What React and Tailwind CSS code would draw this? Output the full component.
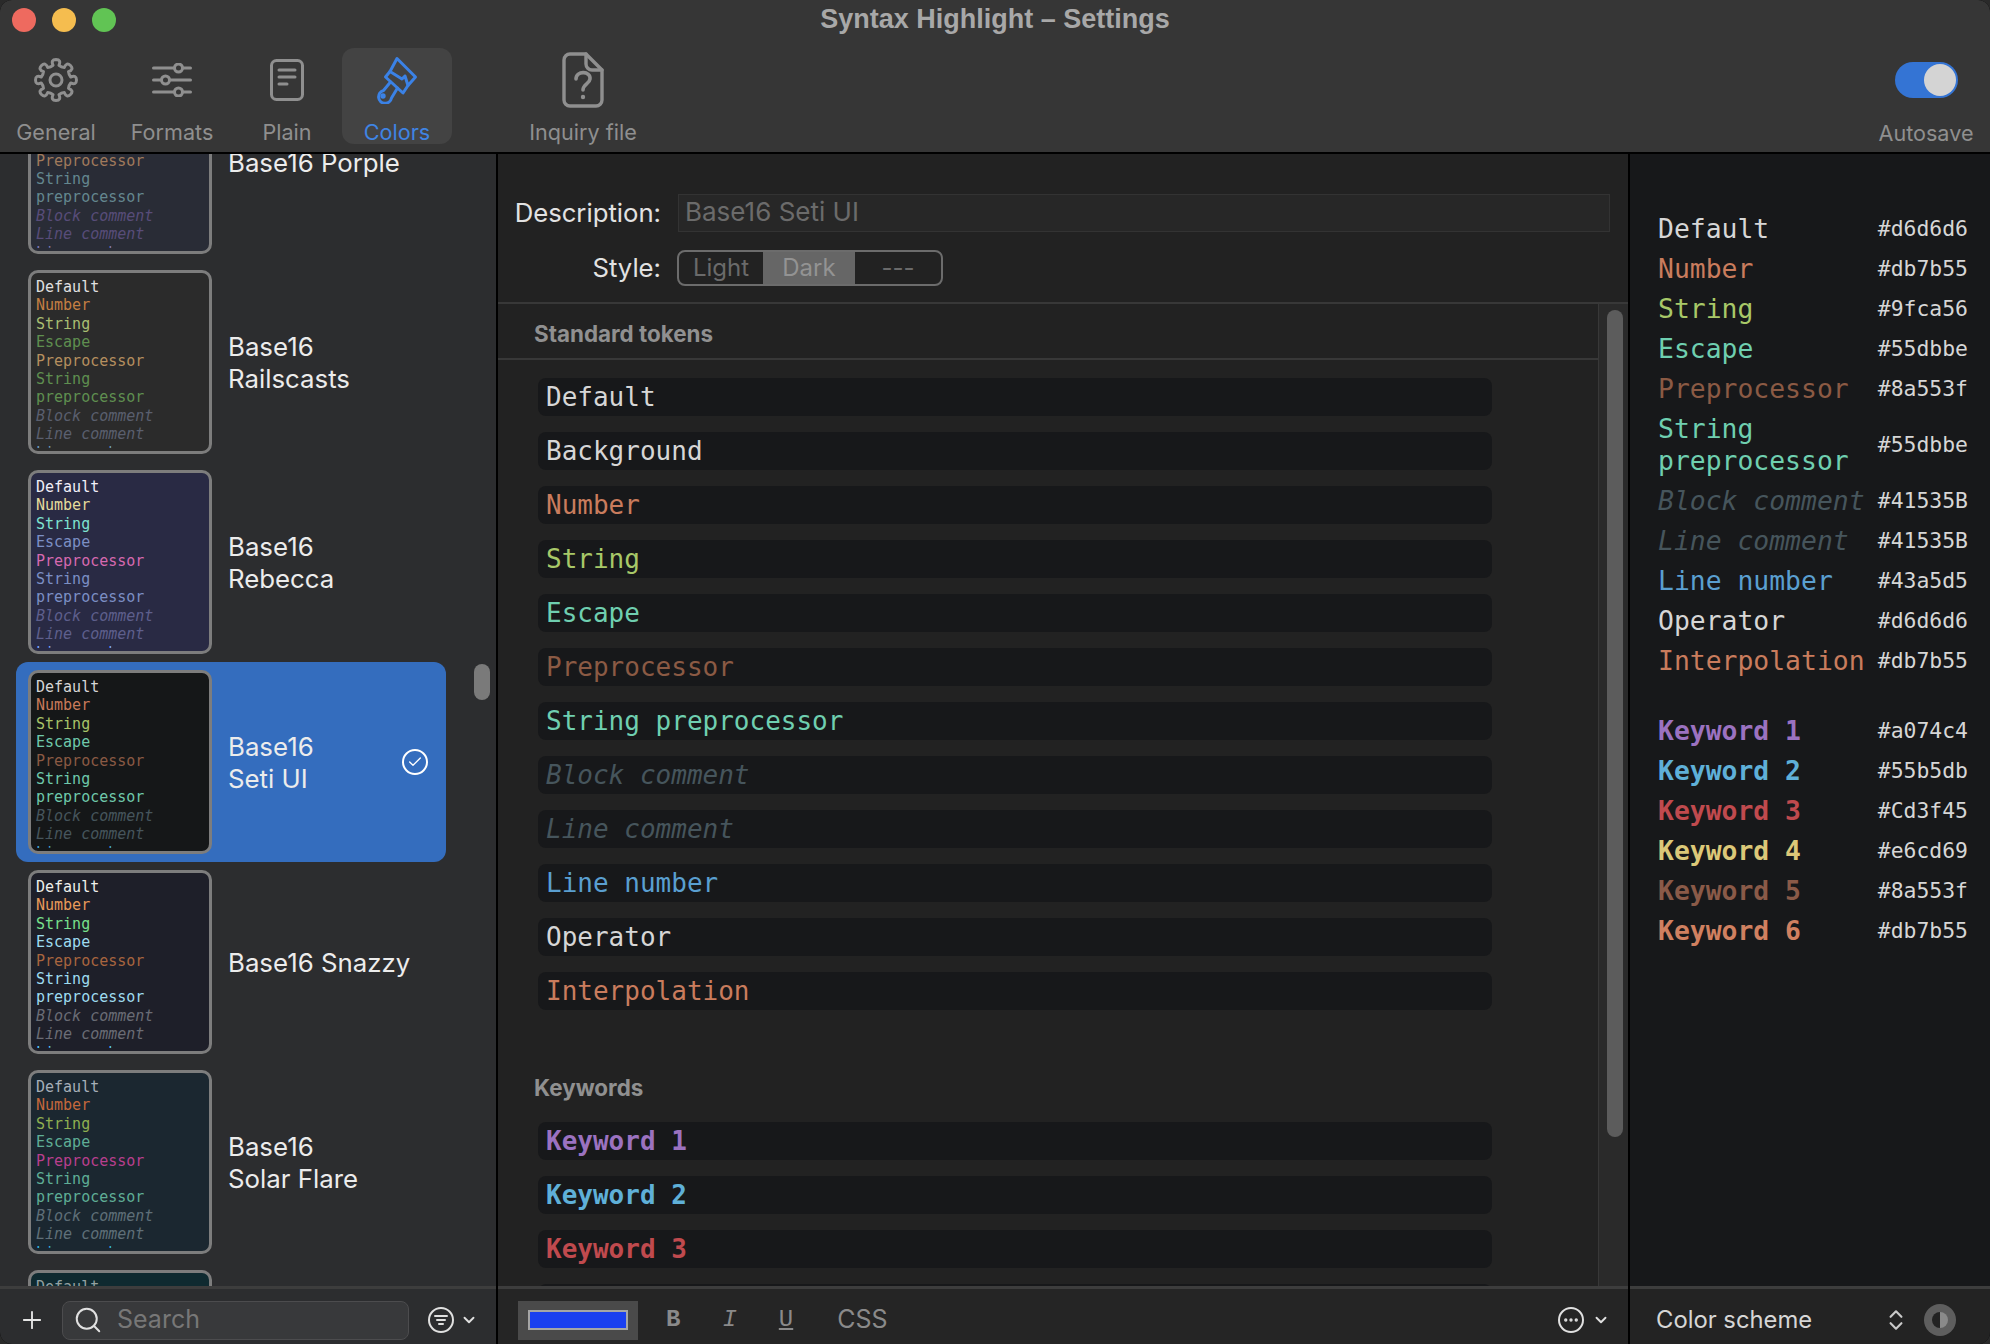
import { Plus, Search, ChevronDown, ChevronsUpDown, Check, Ellipsis } from "lucide-react";

const mono = "font-['DejaVu_Sans_Mono','Liberation_Mono',monospace]";

const themes = [
  {
    name: ["Base16 Porple"],
    bg: "bg-[#292c36]",
    colors: ["#d8d8d8", "#d28e5d", "#9a9f6f", "#64878f", "#a07a5c", "#64878f", "#64878f", "#584c79", "#584c79", "#7e79b5"],
  },
  {
    name: ["Base16", "Railscasts"],
    bg: "bg-[#2b2b2b]",
    colors: ["#e0e0e0", "#c47f43", "#a9bf72", "#5f8f50", "#b58f5f", "#5f8f50", "#5f8f50", "#5a5f6e", "#5a5f6e", "#6d9cbe"],
  },
  {
    name: ["Base16", "Rebecca"],
    bg: "bg-[#292a44]",
    colors: ["#f1eff8", "#e5dc9c", "#7fe3d0", "#7c8fc4", "#d669b0", "#7c8fc4", "#7c8fc4", "#5e5f8c", "#5e5f8c", "#7aa5ff"],
  },
  {
    name: ["Base16", "Seti UI"],
    bg: "bg-[#151718]",
    selected: true,
    colors: ["#d6d6d6", "#c87a5a", "#a8c468", "#6fc9ab", "#8a5a44", "#6fc9ab", "#6fc9ab", "#46555c", "#46555c", "#43a5d5"],
  },
  {
    name: ["Base16 Snazzy"],
    bg: "bg-[#1e1f29]",
    colors: ["#eff0eb", "#e89a5a", "#78e08c", "#9edcf0", "#a8653f", "#9edcf0", "#9edcf0", "#6a6c75", "#6a6c75", "#57c7ff"],
  },
  {
    name: ["Base16", "Solar Flare"],
    bg: "bg-[#1b2730]",
    colors: ["#a6afb8", "#c4683c", "#8fb050", "#5fae96", "#b83f8e", "#5fae96", "#5fae96", "#5f6f78", "#5f6f78", "#33b5e1"],
  },
  {
    name: ["Base16", "Solarized Dark"],
    bg: "bg-[#0f2a30]",
    colors: ["#93a1a1", "#d33682", "#859900", "#2aa198", "#cb4b16", "#2aa198", "#2aa198", "#586e75", "#586e75", "#268bd2"],
  },
];

const sampleLines = [
  "Default", "Number", "String", "Escape", "Preprocessor", "String", "preprocessor", "Block comment", "Line comment", "Line number",
];

const tokens = [
  { name: "Default", color: "#d6d6d6", hex: "#d6d6d6" },
  { name: "Number", color: "#c97c5d", hex: "#db7b55" },
  { name: "String", color: "#a8c868", hex: "#9fca56" },
  { name: "Escape", color: "#6fcfb0", hex: "#55dbbe" },
  { name: "Preprocessor", color: "#8b5a44", hex: "#8a553f" },
  { name: "String preprocessor", color: "#6fcfb0", hex: "#55dbbe" },
  { name: "Block comment", color: "#46555c", hex: "#41535B", italic: true },
  { name: "Line comment", color: "#46555c", hex: "#41535B", italic: true },
  { name: "Line number", color: "#5a9fd0", hex: "#43a5d5" },
  { name: "Operator", color: "#d6d6d6", hex: "#d6d6d6" },
  { name: "Interpolation", color: "#c97c5d", hex: "#db7b55" },
];

const keywords = [
  { name: "Keyword 1", color: "#9b72c0", hex: "#a074c4" },
  { name: "Keyword 2", color: "#5fb0d8", hex: "#55b5db" },
  { name: "Keyword 3", color: "#c04a4e", hex: "#Cd3f45" },
  { name: "Keyword 4", color: "#dcc878", hex: "#e6cd69" },
  { name: "Keyword 5", color: "#8a5a48", hex: "#8a553f" },
  { name: "Keyword 6", color: "#d08060", hex: "#db7b55" },
];

// gear outline with 8 rounded teeth
function gearPath(cx, cy, outer, inner) {
  const pts = [];
  for (let i = 0; i < 8; i++) {
    const a = (i * Math.PI) / 4 - Math.PI / 2;
    const p = (r, d) => `${(cx + r * Math.cos(a + d)).toFixed(2)} ${(cy + r * Math.sin(a + d)).toFixed(2)}`;
    pts.push(`${i === 0 ? "M" : "Q"} ${i === 0 ? "" : p(inner * 0.92, -Math.PI / 8) + " "}${p(inner, -0.2)}`);
    pts.push(`Q ${p(outer * 1.03, -0.26)} ${p(outer, 0)}`);
    pts.push(`Q ${p(outer * 1.03, 0.26)} ${p(inner, 0.2)}`);
  }
  const a = -Math.PI / 2;
  const r = inner;
  pts.push(`Q ${(cx + inner * 0.92 * Math.cos(a - Math.PI / 8)).toFixed(2)} ${(cy + inner * 0.92 * Math.sin(a - Math.PI / 8)).toFixed(2)} ${(cx + r * Math.cos(a - 0.2)).toFixed(2)} ${(cy + r * Math.sin(a - 0.2)).toFixed(2)}`);
  return pts.join(" ") + " Z";
}

function GearIcon() {
  return (
    <svg width="44" height="44" viewBox="0 0 44 44" fill="none" stroke="#8f8f8f" strokeWidth="3" strokeLinejoin="round">
      <path d={gearPath(22, 22, 20.5, 15)} />
      <circle cx="22" cy="22" r="6" />
    </svg>
  );
}

function SlidersIcon() {
  return (
    <svg width="40" height="34" viewBox="0 0 40 34" fill="none" stroke="#8f8f8f" strokeWidth="3" strokeLinecap="round">
      <path d="M1.5 5H22M31 5H38.5M1.5 17H9M18 17H38.5M1.5 29H22M31 29H38.5" />
      <circle cx="26.5" cy="5" r="4" />
      <circle cx="13.5" cy="17" r="4" />
      <circle cx="26.5" cy="29" r="4" />
    </svg>
  );
}

function DocIcon() {
  return (
    <svg width="34" height="42" viewBox="0 0 34 42" fill="none" stroke="#8f8f8f" strokeWidth="3" strokeLinecap="round">
      <rect x="1.5" y="1.5" width="31" height="39" rx="5" />
      <path d="M9 11H25M9 18H25M9 25H17" />
    </svg>
  );
}

function BrushIcon() {
  return (
    <svg width="44" height="48" viewBox="376 56 44 48" fill="none" stroke="#3b82e6" strokeWidth="3" strokeLinejoin="round" strokeLinecap="round">
      <path d="M398 58.5L416.5 77L409 85.5L406 76L403 79L391 71.5Z" />
      <path d="M391 71.5L386.5 77L404 93L409 85.5" />
      <path d="M391.5 82L384.5 90.5A6.5 6.5 0 1 0 392.500 98L398.500 88" />
      <circle cx="384" cy="96" r="1.2" fill="#3b82e6" />
    </svg>
  );
}

function InquiryIcon() {
  return (
    <svg width="42" height="56" viewBox="0 0 42 56" fill="none" stroke="#8f8f8f" strokeWidth="3.4" strokeLinejoin="round" strokeLinecap="round">
      <path d="M24 2H8A6 6 0 0 0 2 8V48A6 6 0 0 0 8 54H34A6 6 0 0 0 40 48V18Z" />
      <path d="M24 2V12A6 6 0 0 0 30 18H40" />
      <path d="M14 27C14 18 29 19 28 27C27.500 32 21 32 21 38" strokeWidth="3.6" />
      <circle cx="21" cy="45" r="1.4" fill="#8f8f8f" strokeWidth="1.6" />
    </svg>
  );
}

function ToolItem({ label, width, active, children }) {
  return (
    <div className={`${width} h-[96px] flex flex-col items-center rounded-[12px] ${active ? "bg-[#434343]" : ""}`}>
      <div className="h-[64px] flex items-center justify-center">{children}</div>
      <div className={`mt-[9px] text-[21.6px] leading-6 ${active ? "text-[#3f84e4]" : "text-[#8f8f8f]"}`}>{label}</div>
    </div>
  );
}

function Toolbar() {
  return (
    <header className="h-[154px] bg-[#363636] border-b-2 border-black shrink-0">
      <div className="h-[48px] flex items-start">
        <div className="w-[130px] pl-3 pt-2 flex gap-4">
          <span className="w-6 h-6 rounded-full bg-[#ee6a5f]" />
          <span className="w-6 h-6 rounded-full bg-[#f5bd4f]" />
          <span className="w-6 h-6 rounded-full bg-[#61c454]" />
        </div>
        <div className="flex-1 pt-[3px] text-center text-[27px] leading-8 font-bold text-[#a8a8a8] font-['Liberation_Sans',sans-serif]">
          Syntax Highlight – Settings
        </div>
        <div className="w-[130px]" />
      </div>
      <div className="flex">
        <ToolItem label="General" width="w-[112px]"><GearIcon /></ToolItem>
        <ToolItem label="Formats" width="w-[120px]"><SlidersIcon /></ToolItem>
        <ToolItem label="Plain" width="w-[110px]"><DocIcon /></ToolItem>
        <ToolItem label="Colors" width="w-[110px]" active><BrushIcon /></ToolItem>
        <div className="ml-[66px]">
          <ToolItem label="Inquiry file" width="w-[130px]"><InquiryIcon /></ToolItem>
        </div>
        <div className="ml-auto mr-2 w-[112px] flex flex-col items-center">
          <div className="h-[64px] flex items-center justify-center">
            <div className="w-[63px] h-[36px] rounded-full bg-[#3474d4] flex items-center justify-end pr-[2px]">
              <span className="w-[32px] h-[32px] rounded-full bg-[#d4d4d4]" />
            </div>
          </div>
          <div className="mt-[9px] text-[21.6px] leading-6 text-[#8f8f8f]">Autosave</div>
        </div>
      </div>
    </header>
  );
}

function Thumb({ theme }) {
  return (
    <div className={`w-[184px] h-[184px] shrink-0 rounded-[10px] border-[3px] border-[#7d7d7d] overflow-hidden ${theme.bg}`}>
      <div className={`pl-[5px] pt-[5px] h-[175px] overflow-hidden text-[15px] leading-[18.4px] ${mono}`}>
        {sampleLines.map((line, i) => (
          <div key={i} className={i === 7 || i === 8 ? "italic" : ""} style={{ color: theme.colors[i] }}>
            {line}
          </div>
        ))}
      </div>
    </div>
  );
}

function ThemeRow({ theme }) {
  return (
    <div className={`ml-4 mr-[50px] h-[200px] pl-3 pt-2 flex items-start rounded-[12px] ${theme.selected ? "bg-[#346dbe]" : ""}`}>
      <Thumb theme={theme} />
      <div className="h-[186px] flex-1 flex items-center pl-4 pr-[18px] justify-between">
        <div className="text-[25.8px] leading-8 text-[#ececec]">
          {theme.name.map((n) => <div key={n}>{n}</div>)}
        </div>
        {theme.selected && (
          <span className="-mt-[3px] w-[26px] h-[26px] rounded-full border-2 border-white flex items-center justify-center">
            <Check size={16} color="white" strokeWidth={2} />
          </span>
        )}
      </div>
    </div>
  );
}

function FilterIcon() {
  return (
    <svg width="26" height="26" viewBox="0 0 26 26" fill="none" stroke="#e0e0e0" strokeWidth="2" strokeLinecap="round">
      <circle cx="13" cy="13" r="12" />
      <path d="M7 9H19M9 13H17M11 17H15" />
    </svg>
  );
}

function Sidebar() {
  return (
    <aside className="w-[498px] shrink-0 flex flex-col bg-[#2c2d2f] border-r-2 border-black">
      <div className="relative flex-1 overflow-hidden">
        <div className="-mt-[92px]">
          {themes.map((t) => <ThemeRow key={t.name.join(" ")} theme={t} />)}
        </div>
        <div className="absolute left-[474px] top-[510px] w-4 h-9 rounded-full bg-[#7a7a7a]" />
      </div>
      <div className="h-[58px] shrink-0 border-t-[3px] border-[#3d3d3d] pt-[7px] flex items-center">
        <Plus size={28} color="#e6e6e6" strokeWidth={1.6} className="ml-[18px]" />
        <div className="ml-[16px] w-[347px] h-[39px] rounded-[8px] bg-[#38393b] border border-[#4c4c4e] flex items-center">
          <Search size={30} color="#e0e0e0" strokeWidth={1.6} className="ml-[10px]" />
          <span className="ml-[14px] text-[25px] text-[#777777]">Search</span>
        </div>
        <div className="ml-[19px]"><FilterIcon /></div>
        <ChevronDown size={18} color="#e0e0e0" strokeWidth={2.5} className="ml-[6px]" />
      </div>
    </aside>
  );
}

function TokenRow({ token, bold }) {
  return (
    <div className={`h-[38px] rounded-[8px] bg-[#17181a] pl-[8px] flex items-center text-[26px] ${mono} ${bold ? "font-bold" : ""} ${token.italic ? "italic" : ""}`} style={{ color: token.color }}>
      {token.name}
    </div>
  );
}

function Editor() {
  return (
    <main className="flex-1 min-w-0 flex flex-col bg-[#222222]">
      <div className="h-[150px] shrink-0 pt-10 border-b-2 border-[#383838]">
        <div className="flex items-center">
          <span className="w-[163px] text-right text-[25.7px] leading-[38px] text-[#e2e2e2]">Description:</span>
          <div className="ml-[17px] w-[932px] h-[38px] pl-[6px] flex items-center bg-[#272727] border border-[#333333] text-[26px] leading-[34px] pb-[2px] text-[#6b6b6b]">
            Base16 Seti UI
          </div>
        </div>
        <div className="mt-[18px] flex items-center">
          <span className="w-[163px] text-right text-[25.7px] leading-[36px] text-[#e2e2e2]">Style:</span>
          <div className="ml-[16px] w-[266px] h-[36px] flex rounded-[8px] border-2 border-[#6c6c6c] overflow-hidden text-[24px] text-[#6a6a6a]">
            <span className="w-[84px] flex items-center justify-center">Light</span>
            <span className="w-[92px] flex items-center justify-center bg-[#666666] text-[#939393]">Dark</span>
            <span className="flex-1 flex items-center justify-center">---</span>
          </div>
        </div>
      </div>
      <div className="flex-1 min-h-0 flex">
        <div className="flex-1 min-w-0 overflow-hidden">
          <div className="h-[56px] pt-[6px] flex items-center pl-[36px] border-b-2 border-[#383838] text-[22.4px] font-bold text-[#909090]">
            Standard tokens
          </div>
          <div className="mt-[18px] ml-10 mr-[106px] flex flex-col gap-4">
            {tokens.slice(0, 1).map((t) => <TokenRow key={t.name} token={t} />)}
            <TokenRow token={{ name: "Background", color: "#d6d6d6" }} />
            {tokens.slice(1).map((t) => <TokenRow key={t.name} token={t} />)}
          </div>
          <div className="mt-[62px] pl-[36px] text-[22.4px] leading-8 font-bold text-[#909090]">Keywords</div>
          <div className="mt-[18px] ml-10 mr-[106px] flex flex-col gap-4">
            {keywords.map((t) => <TokenRow key={t.name} token={t} bold />)}
          </div>
        </div>
        <div className="w-[30px] shrink-0 bg-[#2a2a2a] border-l border-[#383838] pl-2 pt-[6px]">
          <div className="w-4 h-[827px] rounded-full bg-[#5c5c5c]" />
        </div>
      </div>
      <div className="h-[58px] shrink-0 border-t-[3px] border-[#3d3d3d] pt-[7px] bg-[#252525] flex items-center">
        <div className="ml-5 w-[120px] h-[39px] bg-[#4a4a4a] flex items-center justify-center">
          <div className="w-[100px] h-[20px] bg-[#1a3ff0] border-2 border-[#a5a5a5]" />
        </div>
        <span className="ml-7 text-[24px] font-bold text-[#8a8a8a] font-['Liberation_Mono',monospace]">B</span>
        <span className="ml-[42px] text-[24px] italic text-[#8a8a8a] font-['Liberation_Mono',monospace]">I</span>
        <span className="ml-[42px] text-[24px] underline text-[#8a8a8a] font-['Liberation_Mono',monospace]">U</span>
        <span className="ml-[44px] text-[25px] text-[#8a8a8a]">CSS</span>
        <span className="ml-auto w-[26px] h-[26px] rounded-full border-2 border-[#e0e0e0] flex items-center justify-center">
          <Ellipsis size={18} color="#e0e0e0" strokeWidth={2.5} />
        </span>
        <ChevronDown size={18} color="#e0e0e0" strokeWidth={2.5} className="ml-2 mr-[18px]" />
      </div>
    </main>
  );
}

function PreviewRow({ token, bold }) {
  return (
    <div className="flex items-center justify-between py-[4px]">
      <div className={`text-[26.4px] leading-8 ${mono} ${bold ? "font-bold" : ""} ${token.italic ? "italic" : ""}`} style={{ color: token.color }}>
        {token.name === "String preprocessor" ? (<><div>String</div><div>preprocessor</div></>) : token.name}
      </div>
      <div className={`text-[21.4px] leading-8 text-[#d6d6d6] ${mono}`}>{token.hex}</div>
    </div>
  );
}

function Preview() {
  return (
    <aside className="w-[362px] shrink-0 flex flex-col bg-[#17181a] border-l-2 border-black">
      <div className="flex-1 min-h-0 pt-[55px] pl-[28px] pr-[22px]">
        {tokens.map((t) => <PreviewRow key={t.name} token={t} />)}
        <div className="h-[30px]" />
        {keywords.map((t) => <PreviewRow key={t.name} token={t} bold />)}
      </div>
      <div className="h-[58px] shrink-0 border-t-[3px] border-[#3d3d3d] pt-[7px] bg-[#232323] flex items-center">
        <span className="ml-[26px] text-[23.8px] text-[#d6d6d6]">Color scheme</span>
        <ChevronsUpDown size={26} color="#c8c8c8" strokeWidth={2} className="ml-auto" />
        <svg width="32" height="32" viewBox="0 0 32 32" className="ml-[15px] mr-[34px]">
          <circle cx="16" cy="16" r="16" fill="#5e5e5e" />
          <path d="M16 8A8 8 0 0 0 16 24Z" fill="#232323" />
          <path d="M16 8A8 8 0 0 1 16 24Z" fill="#8a8a8a" />
        </svg>
      </div>
    </aside>
  );
}

export default function App() {
  return (
    <div className="w-[1990px] h-[1344px] bg-[#2a2a2a]">
      <div className="w-full h-full overflow-hidden rounded-[12px] flex flex-col font-['Inter',sans-serif] bg-black">
        <Toolbar />
        <div className="flex-1 min-h-0 flex">
          <Sidebar />
          <Editor />
          <Preview />
        </div>
      </div>
    </div>
  );
}
